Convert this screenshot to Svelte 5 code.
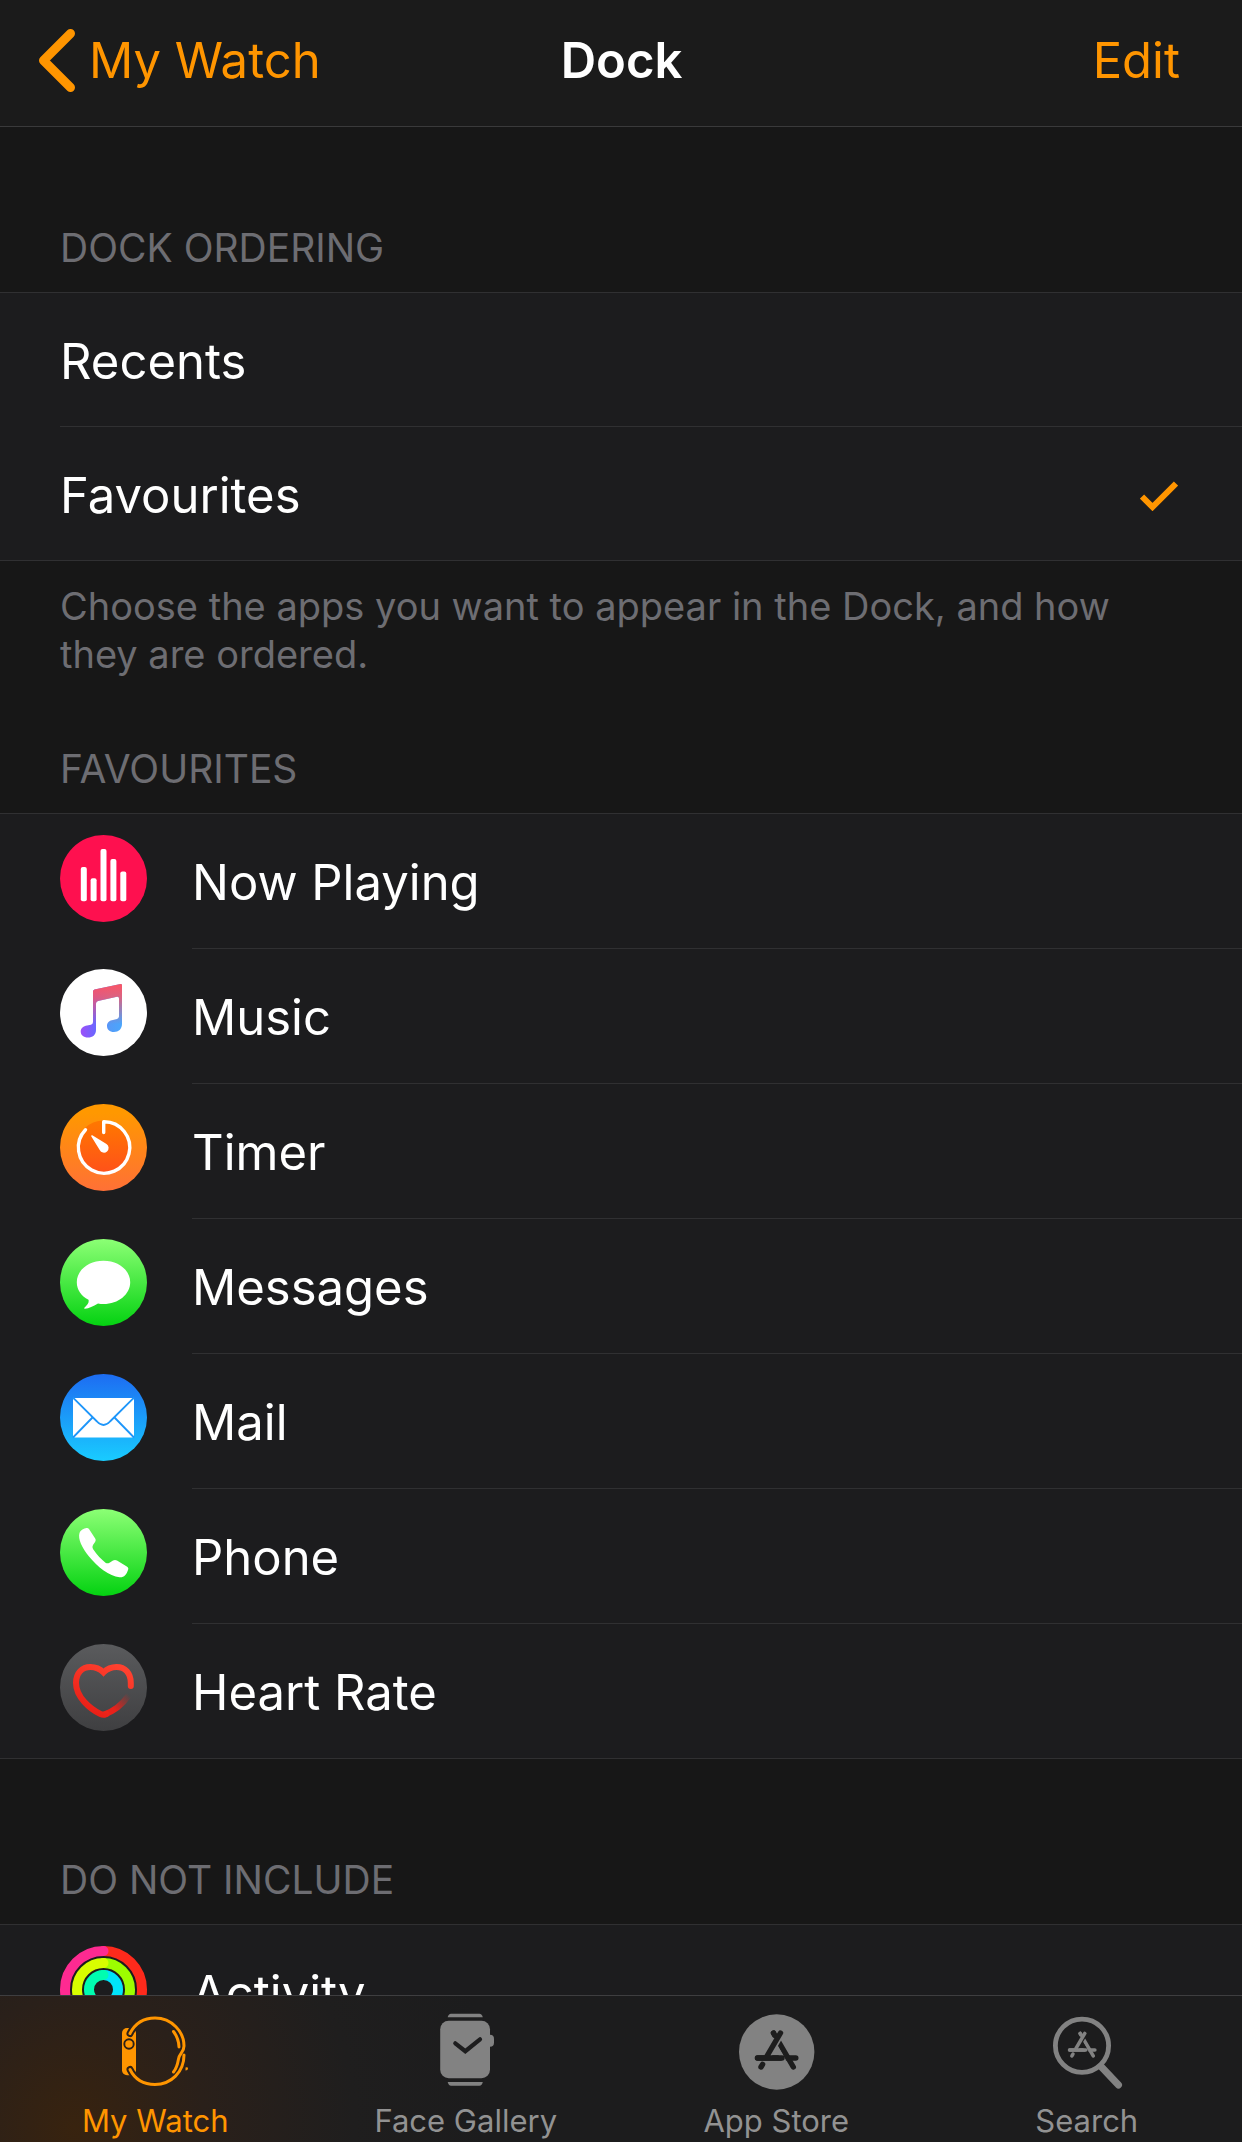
<script>
  let ordering = $state('Favourites');
  let activeTab = $state('My Watch');

  const orderings = ['Recents', 'Favourites'];

  const favourites = [
    'Now Playing',
    'Music',
    'Timer',
    'Messages',
    'Mail',
    'Phone',
    'Heart Rate'
  ];

  const notIncluded = ['Activity'];

  const tabs = ['My Watch', 'Face Gallery', 'App Store', 'Search'];
</script>

{#snippet appIcon(name)}
  <svg class="app-icon" viewBox="0 0 87 87" aria-hidden="true">
    {#if name === 'Now Playing'}
      <circle cx="43.5" cy="43.5" r="43.5" fill="#fe104f" />
      <g fill="#fff">
        <rect x="20.8" y="32" width="6" height="34.3" rx="2" />
        <rect x="30.6" y="43.3" width="6" height="23" rx="2" />
        <rect x="40.5" y="14" width="6" height="52.3" rx="2" />
        <rect x="50.4" y="24" width="6" height="42.3" rx="2" />
        <rect x="60.3" y="36.6" width="6" height="29.7" rx="2" />
      </g>
    {:else if name === 'Music'}
      <defs>
        <linearGradient id="note-base" x1="0" y1="0" x2="1" y2="0">
          <stop offset="0" stop-color="#9c4ff8" />
          <stop offset="0.35" stop-color="#6b66ff" />
          <stop offset="0.7" stop-color="#559bf8" />
          <stop offset="1" stop-color="#4aa6fc" />
        </linearGradient>
        <linearGradient id="note-top" x1="0" y1="0" x2="0" y2="1">
          <stop offset="0" stop-color="#fb5465" />
          <stop offset="0.25" stop-color="#fb5465" stop-opacity="0.8" />
          <stop offset="0.75" stop-color="#fb5465" stop-opacity="0" />
        </linearGradient>
        <path
          id="note"
          d="M33 22.5Q33 21 34.5 20.6L60.5 15Q62 14.8 62 16.3V55C62 60 58.5 63 54 63 49.5 63 47 60.5 47 57 47 53 50 51.5 53 51L57 50Q59 49.5 59 47V29.5Q59 27.3 57 27.8L38 32Q36 32.5 36 34.5V61C36 66 32.5 68.5 28 68.5 23.5 68.5 20.7 66 20.7 62.5 20.7 59 23.5 57 27 56.5L31 55.7Q33 55 33 53Z"
        />
      </defs>
      <circle cx="43.5" cy="43.5" r="43.5" fill="#fff" />
      <use href="#note" fill="url(#note-base)" />
      <use href="#note" fill="url(#note-top)" />
    {:else if name === 'Timer'}
      <defs>
        <linearGradient id="timer-bg" x1="0" y1="0" x2="0" y2="1">
          <stop offset="0.1" stop-color="#ff9800" />
          <stop offset="1" stop-color="#ff7036" />
        </linearGradient>
        <linearGradient id="timer-dial" x1="0" y1="0" x2="0" y2="1">
          <stop offset="0" stop-color="#ff7800" />
          <stop offset="1" stop-color="#ff501a" />
        </linearGradient>
      </defs>
      <circle cx="43.5" cy="43.5" r="43.5" fill="url(#timer-bg)" />
      <circle cx="43.5" cy="43.5" r="27" fill="url(#timer-dial)" />
      <path
        d="M43.7 28.5V17.8A25.7 25.7 0 1 1 25.5 25.7"
        fill="none"
        stroke="#fff"
        stroke-width="3.4"
        stroke-linecap="round"
        stroke-linejoin="round"
      />
      <path d="M31.2 32.2Q31 31 32.3 31.3L46.5 40A4.7 4.7 0 1 1 39.7 46Z" fill="#fff" />
    {:else if name === 'Messages'}
      <defs>
        <linearGradient id="messages-bg" x1="0" y1="0" x2="0" y2="1">
          <stop offset="0" stop-color="#8cff75" />
          <stop offset="1" stop-color="#04d211" />
        </linearGradient>
      </defs>
      <circle cx="43.5" cy="43.5" r="43.5" fill="url(#messages-bg)" />
      <path
        d="M43.5 21.7C58.5 21.7 70.2 31.2 70.2 43.2S58.5 65 43.5 65Q40.5 65 38 64.4C33 67 29 69.6 25 69.7 23.7 69.7 24 69 24.6 68.5 27.5 66 29.3 63.5 28.5 60.8 21 57 16.8 50.5 16.8 43.2 16.8 31.2 28.5 21.7 43.5 21.7Z"
        fill="#fff"
      />
    {:else if name === 'Mail'}
      <defs>
        <linearGradient id="mail-bg" x1="0" y1="0" x2="0" y2="1">
          <stop offset="0" stop-color="#1d6cf2" />
          <stop offset="1" stop-color="#19ccff" />
        </linearGradient>
      </defs>
      <circle cx="43.5" cy="43.5" r="43.5" fill="url(#mail-bg)" />
      <rect x="13" y="24" width="61" height="39.5" rx="2" fill="#fff" />
      <g fill="none" stroke="#1e96fa" stroke-width="1.8">
        <path d="M13 23.7L37 47.5Q43.5 54.5 50 47.5L74 23.7" />
        <path d="M32.5 43.5L13 63.5M54.5 43.5L74 63.5" />
      </g>
    {:else if name === 'Phone'}
      <defs>
        <linearGradient id="phone-bg" x1="0" y1="0" x2="0" y2="1">
          <stop offset="0" stop-color="#8cff75" />
          <stop offset="1" stop-color="#04d211" />
        </linearGradient>
      </defs>
      <circle cx="43.5" cy="43.5" r="43.5" fill="url(#phone-bg)" />
      <path
        d="M19.5 24C20.5 21 24 19.5 26.5 19Q28 18.7 29 20L35.2 29.5Q36.3 31 35.2 32.8L33 36Q31.8 38 33 40C37 46 41.5 50.5 45.5 53.7Q47.5 55 49.5 53.7L53 51.5Q55 50.5 57 51.5L66.8 57.5Q69 58.7 68 61C66.5 65.5 64 68.7 59.5 68.3 49.5 67.3 37.5 58 29 47.5 22 38.5 17.7 30 19.5 24Z"
        fill="#fff"
      />
    {:else if name === 'Heart Rate'}
      <defs>
        <linearGradient id="heart-bg" x1="0" y1="0" x2="0" y2="1">
          <stop offset="0" stop-color="#5a5b5d" />
          <stop offset="1" stop-color="#3f3f41" />
        </linearGradient>
        <linearGradient id="heart-line" x1="0.8" y1="0" x2="0.2" y2="1">
          <stop offset="0" stop-color="#ff412f" />
          <stop offset="1" stop-color="#e81d15" />
        </linearGradient>
        <linearGradient id="heart-fade" gradientUnits="userSpaceOnUse" x1="54" y1="65" x2="69" y2="51">
          <stop offset="0" stop-color="#e9211a" />
          <stop offset="1" stop-color="#e9211a" stop-opacity="0" />
        </linearGradient>
      </defs>
      <circle cx="43.5" cy="43.5" r="43.5" fill="url(#heart-bg)" />
      <g fill="none" stroke-width="6">
        <path d="M43.5 70.9C52 68 62 61 69 51" stroke="url(#heart-fade)" />
        <path
          d="M70.8 42V39C70.8 29 65 23 56.5 23 51 23 47 25 43.5 28.5 40 25 36 23 30.5 23 22 23 16 29 16 39 16 53 30 65 40.5 70Q43.5 71.5 46.5 70"
          stroke="url(#heart-line)"
          stroke-linecap="round"
        />
      </g>
    {:else if name === 'Activity'}
      <g fill="none" stroke-width="10" stroke-linecap="round">
        <path d="M43.5 5A38.5 38.5 0 0 1 43.5 82" stroke="#fe2a1c" />
        <path d="M43.5 82A38.5 38.5 0 0 1 43.5 5" stroke="#fe2a91" />
        <path d="M43.5 17A26.5 26.5 0 0 1 43.5 70" stroke="#9dfd00" />
        <path d="M43.5 70A26.5 26.5 0 0 1 43.5 17" stroke="#d8fe00" />
        <path d="M43.5 29A14.5 14.5 0 0 1 43.5 58" stroke="#00e4fb" />
        <path d="M43.5 58A14.5 14.5 0 0 1 43.5 29" stroke="#00fdb0" />
      </g>
    {/if}
  </svg>
{/snippet}

{#snippet storeMark(ink, gap)}
  <g fill="none" stroke={ink} stroke-width="5.4" stroke-linecap="round">
    <path d="M31.5 56H69.8" />
    <path d="M36.6 62.3L35 65" />
    <path d="M47.5 31L67.3 65" />
    <path d="M48.5 42.5L58.5 59.5" stroke={gap} stroke-width="4" stroke-linecap="butt" />
    <path d="M54.5 31L41 54" stroke={gap} stroke-width="8.5" stroke-linecap="butt" />
    <path d="M47.5 31L49 33.5M54.5 31L41 54M31.5 56H56" />
  </g>
{/snippet}

{#snippet tabIcon(name)}
  <svg class="tab-icon" viewBox="10 10 80 80" aria-hidden="true">
    {#if name === 'My Watch'}
      <mask id="case-cutout">
        <rect x="10" y="10" width="80" height="80" fill="#fff" />
        <circle cx="24" cy="42" r="4.7" fill="none" stroke="#000" stroke-width="1.9" />
        <path
          d="M25 31.5Q27 27 32 22M25 67.5Q27 72 32 77"
          fill="none"
          stroke="#000"
          stroke-width="7"
          stroke-linecap="round"
        />
      </mask>
      <rect x="17" y="26" width="14" height="47.3" rx="5" fill="currentColor" mask="url(#case-cutout)" />
      <g fill="none" stroke="currentColor" stroke-width="3" stroke-linecap="round">
        <path d="M25 31.5C30 21.5 39 16 50 16 67 16 79 30 79 44 79 50 74.5 51 73.5 57 72.5 63 71 67 68.5 70" />
        <path d="M25 67.5C30 77.5 39 82.5 50 82.5 66 82.5 79 70 79 53" />
        <path d="M68.5 29.5C72 34 73.8 39 74 45" />
      </g>
      <path d="M80.5 68.5V65.5Q83 64.5 83 66.5 83 68.5 80.5 68.5Z" fill="currentColor" />
    {:else if name === 'Face Gallery'}
      <g fill="currentColor">
        <path d="M31.7 15.2Q32.5 11.7 35 11.7H63.5Q66 11.7 66.8 15.2Z" />
        <path d="M31.7 80Q32.5 83.7 35 83.7H63.5Q66 83.7 66.8 80Z" />
        <rect x="68" y="32.7" width="10" height="12" rx="4" />
        <rect x="24.2" y="18.7" width="49.8" height="57.6" rx="8.5" />
      </g>
      <path
        d="M39.3 41.3L49.3 49.2 64 37.3"
        fill="none"
        stroke="#1d1d1e"
        stroke-width="4.2"
        stroke-linecap="round"
      />
    {:else if name === 'App Store'}
      <circle cx="50.7" cy="50" r="37.7" fill="currentColor" />
      {@render storeMark('#1d1d1d', '#828282')}
    {:else}
      <circle cx="45" cy="43.7" r="26.6" fill="none" stroke="currentColor" stroke-width="4.8" />
      <path d="M64.5 65L81.5 83" fill="none" stroke="currentColor" stroke-width="7" stroke-linecap="round" />
      <g transform="translate(11.8 11) scale(0.66)">
        {@render storeMark('#828282', '#1d1d1d')}
      </g>
    {/if}
  </svg>
{/snippet}

<div class="screen">
  <header class="navbar">
    <button class="nav-button back" type="button">
      <svg class="chevron" viewBox="0 0 36 63" aria-hidden="true">
        <path d="M31.5 4.5L4.5 31.5 31.5 58.5" />
      </svg>
      My Watch
    </button>
    <h1>Dock</h1>
    <button class="nav-button edit" type="button">Edit</button>
  </header>

  <main>
    <section>
      <h2 id="ordering-title">Dock Ordering</h2>
      <div class="list" role="radiogroup" aria-labelledby="ordering-title">
        {#each orderings as option}
          <label class="option">
            <input type="radio" name="ordering" value={option} bind:group={ordering} />
            <span class="label">{option}</span>
            {#if ordering === option}
              <svg class="check" viewBox="0 0 38 30" aria-hidden="true">
                <path d="M2 15.5L12.5 26 36 2.5" />
              </svg>
            {/if}
          </label>
        {/each}
      </div>
      <p class="note">Choose the apps you want to appear in the Dock, and how they are ordered.</p>
    </section>

    <section class="after-note">
      <h2>Favourites</h2>
      <ul class="list">
        {#each favourites as app}
          <li class="app">
            {@render appIcon(app)}
            <span class="label">{app}</span>
          </li>
        {/each}
      </ul>
    </section>

    <section>
      <h2>Do Not Include</h2>
      <ul class="list">
        {#each notIncluded as app}
          <li class="app">
            {@render appIcon(app)}
            <span class="label">{app}</span>
          </li>
        {/each}
      </ul>
    </section>
  </main>

  <nav class="tabbar">
    {#each tabs as tab}
      <button class="tab" class:active={activeTab === tab} type="button" onclick={() => (activeTab = tab)}>
        {@render tabIcon(tab)}
        <span>{tab}</span>
      </button>
    {/each}
  </nav>
</div>

<style>
  :global(body) {
    background: #171717;
  }

  .screen {
    display: flex;
    flex-direction: column;
    height: 100vh;
    overflow: hidden;
    background: #171717;
    color: #fff;
    font-family: Inter, 'Liberation Sans', sans-serif;
    font-size: 49px;
  }

  button {
    margin: 0;
    padding: 0;
    border: 0;
    background: none;
    color: inherit;
    font: inherit;
    cursor: pointer;
  }

  .navbar {
    display: grid;
    grid-template-columns: 1fr auto 1fr;
    align-items: center;
    flex: none;
    padding: 29px 62px 34px 39px;
    border-bottom: 1px solid #3a3a3b;
    background: #1b1b1b;
    line-height: 63px;
  }

  .navbar h1 {
    margin: 0;
    padding-left: 24px;
    font-size: 49px;
    font-weight: 600;
  }

  .nav-button {
    color: #ff9500;
  }

  .back {
    display: flex;
    align-items: center;
    justify-self: start;
    gap: 14px;
  }

  .edit {
    justify-self: end;
  }

  .chevron {
    width: 36px;
    height: 63px;
  }

  .chevron path {
    fill: none;
    stroke: #ff9500;
    stroke-width: 9;
    stroke-linecap: round;
    stroke-linejoin: round;
  }

  main {
    flex: 1;
    min-height: 0;
    overflow: hidden;
  }

  section {
    padding-top: 97px;
  }

  .after-note {
    padding-top: 67px;
  }

  h2 {
    margin: 0;
    padding: 0 60px 20px;
    color: #6d6d72;
    font-size: 39px;
    font-weight: 400;
    line-height: 48px;
    text-transform: uppercase;
  }

  .list {
    margin: 0;
    padding: 0;
    border-top: 1px solid #303032;
    border-bottom: 1px solid #303032;
    background: #1c1c1e;
    list-style: none;
  }

  .option {
    display: flex;
    position: relative;
    margin-left: 60px;
    padding-right: 64px;
    align-items: center;
    cursor: pointer;
  }

  .option + .option {
    border-top: 1px solid #303032;
  }

  .option input {
    position: absolute;
    opacity: 0;
  }

  .label {
    flex: 1;
    padding: 39px 0 35px;
    line-height: 60px;
  }

  .option .label {
    padding-bottom: 34px;
  }

  .check {
    width: 38px;
    height: 30px;
    margin-top: 4px;
  }

  .check path {
    fill: none;
    stroke: #ff9500;
    stroke-width: 6;
  }

  .note {
    margin: 0;
    padding: 21px 60px 0;
    color: #6d6d72;
    font-size: 38px;
    line-height: 48px;
  }

  .app {
    display: flex;
    align-items: center;
    gap: 45px;
    padding-left: 60px;
  }

  .app + .app .label {
    border-top: 1px solid #303032;
  }

  .app-icon {
    flex: none;
    width: 87px;
    height: 87px;
    margin-bottom: 6px;
  }

  .tabbar {
    display: flex;
    flex: none;
    border-top: 1px solid #3e3e40;
    background: radial-gradient(circle at 6% 90%, #38230f 0, #2a201a 130px, #1f1e1e 280px, #1c1c1d 420px);
  }

  .tab {
    display: flex;
    flex: 1;
    flex-direction: column;
    align-items: center;
    gap: 11px;
    padding: 16px 0 3px;
    color: #828282;
    font-size: 31px;
    line-height: 36px;
  }

  .tab span {
    color: #929292;
  }

  .active,
  .active span {
    color: #ff9500;
  }

  .tab-icon {
    width: 80px;
    height: 80px;
  }
</style>
